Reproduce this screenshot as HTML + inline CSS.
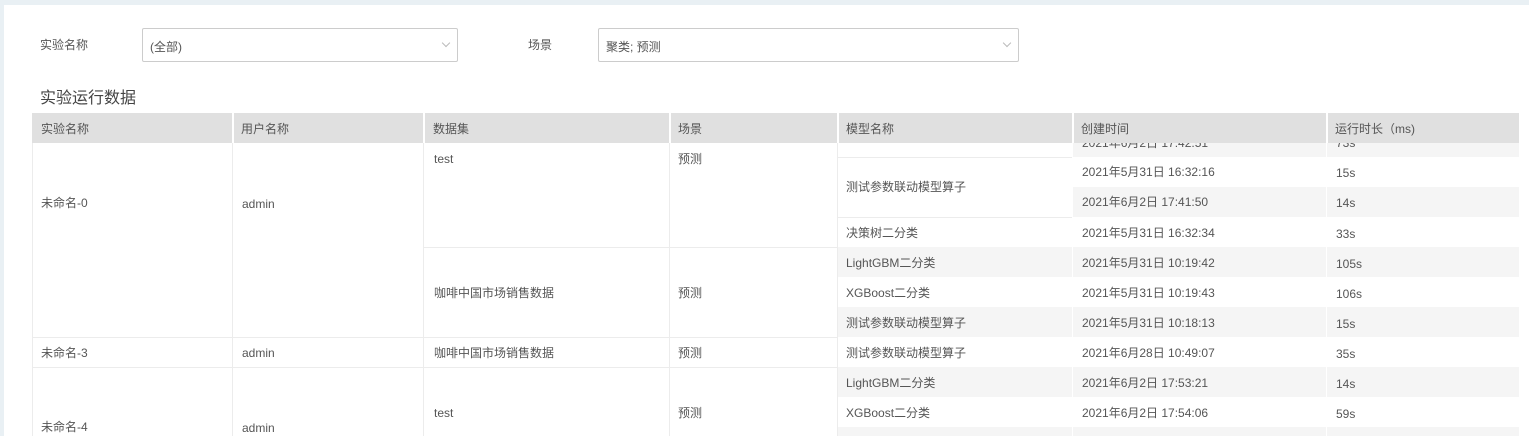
<!DOCTYPE html>
<html><head><meta charset="utf-8"><style>
*{margin:0;padding:0;box-sizing:border-box}
body{width:1529px;height:436px;overflow:hidden;background:#e9f0f4;font-family:"Liberation Sans","Noto Sans CJK SC",sans-serif;font-size:12px;color:#555;position:relative}
.panel{position:absolute;left:4px;top:5px;width:1525px;height:431px;background:#fff}
.a{position:absolute;white-space:nowrap}
.t{position:absolute;line-height:14px;white-space:nowrap;color:#555}
.sel{position:absolute;height:34px;border:1px solid #ccc;border-radius:2px;background:#fff}
.sel span{position:absolute;left:7px;top:9px}
.sel i{position:absolute;right:8px;top:11px;width:6px;height:6px;border-right:1px solid #bbb;border-bottom:1px solid #bbb;transform:rotate(45deg)}
.g{background:#f5f5f5}
.hl{position:absolute;height:1px;background:#ececec}
.vl{position:absolute;width:1px;background:#ececec}
</style></head><body>
<div class="panel"></div>
<div class="t" style="left:40px;top:38px">实验名称</div>
<div class="sel" style="left:142px;top:28px;width:316px"><span>(全部)</span><i></i></div>
<div class="t" style="left:528px;top:38px">场景</div>
<div class="sel" style="left:598px;top:28px;width:421px"><span>聚类; 预测</span><i></i></div>
<div class="t" style="left:40px;top:90px;font-size:16px;line-height:18px;color:#444">实验运行数据</div>

<!-- right section row backgrounds -->
<div class="a g" style="left:1072px;top:143px;width:447px;height:14px"></div>
<div class="a g" style="left:1072px;top:187px;width:447px;height:30px"></div>
<div class="a g" style="left:837px;top:247px;width:682px;height:30px"></div>
<div class="a g" style="left:837px;top:307px;width:682px;height:30px"></div>
<div class="a g" style="left:837px;top:367px;width:682px;height:30px"></div>
<div class="a g" style="left:837px;top:427px;width:682px;height:9px"></div>

<!-- header -->
<div class="a" style="left:32px;top:113px;width:1487px;height:30px;background:#e0e0e0"></div>
<div class="a" style="left:232px;top:113px;width:2px;height:30px;background:#fff"></div>
<div class="a" style="left:423px;top:113px;width:2px;height:30px;background:#fff"></div>
<div class="a" style="left:669px;top:113px;width:2px;height:30px;background:#fff"></div>
<div class="a" style="left:837px;top:113px;width:2px;height:30px;background:#fff"></div>
<div class="a" style="left:1072px;top:113px;width:2px;height:30px;background:#fff"></div>
<div class="a" style="left:1326px;top:113px;width:2px;height:30px;background:#fff"></div>
<div class="t" style="left:41px;top:122px">实验名称</div>
<div class="t" style="left:241px;top:122px">用户名称</div>
<div class="t" style="left:433px;top:122px">数据集</div>
<div class="t" style="left:678px;top:122px">场景</div>
<div class="t" style="left:846px;top:122px">模型名称</div>
<div class="t" style="left:1081px;top:122px">创建时间</div>
<div class="t" style="left:1335px;top:122px">运行时长（ms)</div>

<!-- grid lines -->
<div class="vl" style="left:32px;top:143px;height:293px"></div>
<div class="vl" style="left:232px;top:143px;height:293px"></div>
<div class="vl" style="left:423px;top:143px;height:293px"></div>
<div class="vl" style="left:669px;top:143px;height:293px"></div>
<div class="vl" style="left:837px;top:143px;height:293px"></div>
<div class="vl" style="left:1072px;top:143px;height:293px;background:#fff"></div>
<div class="vl" style="left:1326px;top:143px;height:293px;background:#fff"></div>
<div class="hl" style="left:32px;top:337px;width:805px"></div>
<div class="hl" style="left:32px;top:367px;width:805px"></div>
<div class="hl" style="left:423px;top:247px;width:414px"></div>
<div class="hl" style="left:837px;top:157px;width:235px"></div>
<div class="hl" style="left:837px;top:217px;width:235px"></div>

<!-- left texts -->
<div class="t" style="left:41px;top:196px">未命名-0</div>
<div class="t" style="left:242px;top:197px">admin</div>
<div class="t" style="left:434px;top:152px">test</div>
<div class="t" style="left:678px;top:152px">预测</div>
<div class="t" style="left:434px;top:286px">咖啡中国市场销售数据</div>
<div class="t" style="left:678px;top:286px">预测</div>
<div class="t" style="left:41px;top:346px">未命名-3</div>
<div class="t" style="left:242px;top:346px">admin</div>
<div class="t" style="left:434px;top:346px">咖啡中国市场销售数据</div>
<div class="t" style="left:678px;top:346px">预测</div>
<div class="t" style="left:41px;top:420px">未命名-4</div>
<div class="t" style="left:242px;top:421px">admin</div>
<div class="t" style="left:434px;top:406px">test</div>
<div class="t" style="left:678px;top:406px">预测</div>

<!-- right texts -->
<div class="a" style="left:1072px;top:143px;width:447px;height:14px;overflow:hidden">
<div class="t" style="left:10px;top:-7px">2021年6月2日 17:42:51</div><div class="t" style="left:264px;top:-7px">73s</div></div>
<div class="t" style="left:846px;top:180px">测试参数联动模型算子</div>
<div class="t" style="left:1082px;top:165px">2021年5月31日 16:32:16</div><div class="t" style="left:1336px;top:166px">15s</div>
<div class="t" style="left:1082px;top:195px">2021年6月2日 17:41:50</div><div class="t" style="left:1336px;top:196px">14s</div>
<div class="t" style="left:846px;top:226px">决策树二分类</div><div class="t" style="left:1082px;top:226px">2021年5月31日 16:32:34</div><div class="t" style="left:1336px;top:227px">33s</div>
<div class="t" style="left:846px;top:256px">LightGBM二分类</div><div class="t" style="left:1082px;top:256px">2021年5月31日 10:19:42</div><div class="t" style="left:1336px;top:257px">105s</div>
<div class="t" style="left:846px;top:286px">XGBoost二分类</div><div class="t" style="left:1082px;top:286px">2021年5月31日 10:19:43</div><div class="t" style="left:1336px;top:287px">106s</div>
<div class="t" style="left:846px;top:316px">测试参数联动模型算子</div><div class="t" style="left:1082px;top:316px">2021年5月31日 10:18:13</div><div class="t" style="left:1336px;top:317px">15s</div>
<div class="t" style="left:846px;top:346px">测试参数联动模型算子</div><div class="t" style="left:1082px;top:346px">2021年6月28日 10:49:07</div><div class="t" style="left:1336px;top:347px">35s</div>
<div class="t" style="left:846px;top:376px">LightGBM二分类</div><div class="t" style="left:1082px;top:376px">2021年6月2日 17:53:21</div><div class="t" style="left:1336px;top:377px">14s</div>
<div class="t" style="left:846px;top:406px">XGBoost二分类</div><div class="t" style="left:1082px;top:406px">2021年6月2日 17:54:06</div><div class="t" style="left:1336px;top:407px">59s</div>
</body></html>
